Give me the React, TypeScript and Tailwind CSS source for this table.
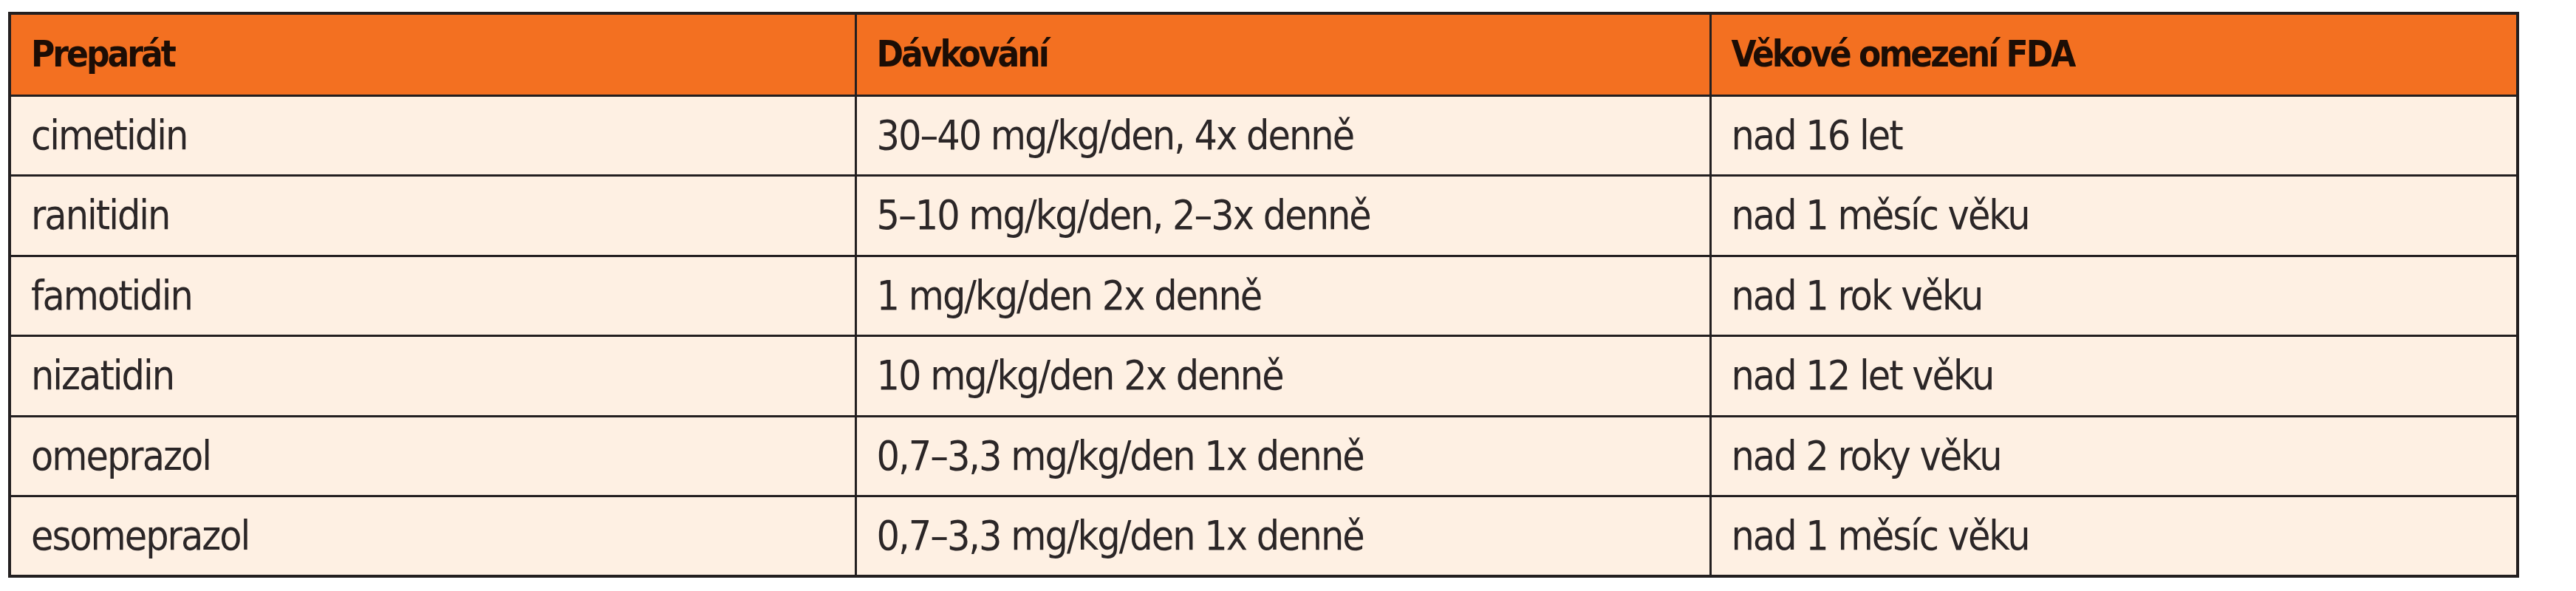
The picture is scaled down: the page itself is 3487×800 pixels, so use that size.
const rows = [
  ["cimetidin", "30–40 mg/kg/den, 4x denně", "nad 16 let"],
  ["ranitidin", "5–10 mg/kg/den, 2–3x denně", "nad 1 měsíc věku"],
  ["famotidin", "1 mg/kg/den 2x denně", "nad 1 rok věku"],
  ["nizatidin", "10 mg/kg/den 2x denně", "nad 12 let věku"],
  ["omeprazol", "0,7–3,3 mg/kg/den 1x denně", "nad 2 roky věku"],
  ["esomeprazol", "0,7–3,3 mg/kg/den 1x denně", "nad 1 měsíc věku"],
];

const headers = ["Preparát", "Dávkování", "Věkové omezení FDA"];

export default function App() {
  return (
    <div className="min-h-[800px] bg-white pt-[16px] pl-[11px] font-['DejaVu_Sans_Condensed','DejaVu_Sans',sans-serif] text-[#231f20]">
      <table className="w-[3395px] table-fixed border-collapse border-[4px] border-[#231f20]">
        <colgroup>
          <col className="w-[1145px]" />
          <col className="w-[1157px]" />
          <col className="w-[1093px]" />
        </colgroup>
        <thead>
          <tr className="bg-[#f37021]">
            {headers.map((h) => (
              <th
                key={h}
                className="h-[111px] border-[3px] border-[#231f20] px-[27px] text-left align-middle text-[49px] font-bold leading-none tracking-[-3px] text-[#1c0d05]"
              >
                {h}
              </th>
            ))}
          </tr>
        </thead>
        <tbody>
          {rows.map((r) => (
            <tr key={r[0]} className="bg-[#fef0e3]">
              {r.map((c, i) => (
                <td
                  key={i}
                  className="h-[108.5px] border-[3px] border-[#231f20] px-[27px] align-middle text-[55px] leading-none tracking-[-2px] text-[#2b2627]"
                >
                  {c}
                </td>
              ))}
            </tr>
          ))}
        </tbody>
      </table>
    </div>
  );
}
